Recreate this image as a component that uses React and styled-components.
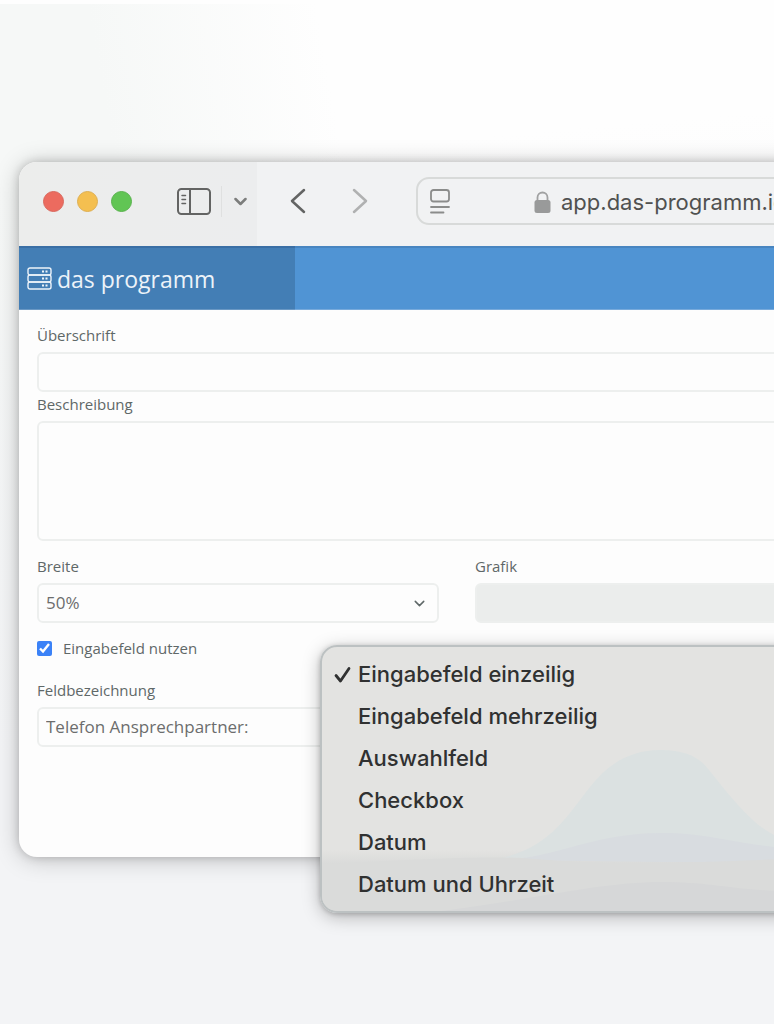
import React, { useState } from "react";
import styled, { createGlobalStyle } from "styled-components";

const GlobalStyle = createGlobalStyle`
  *, *::before, *::after {
    box-sizing: border-box;
  }

  html, body {
    margin: 0;
    min-height: 100%;
    background: #f4f5f6;
  }

  body {
    overflow: hidden;
    font-family: "Open Sans", sans-serif;
    color: #5f6868;
  }

  button, input, textarea, select {
    font: inherit;
    color: inherit;
  }
`;

const StyledPage = styled.main`
  min-height: 100vh;
  padding: 158px 0 120px 19px;
  overflow: hidden;
  border-top: 4px solid #fefefe;
  background:
    linear-gradient(175deg, rgba(243, 244, 246, 0) 16%, #f3f4f6 70%),
    linear-gradient(80deg, #f6f8f7 28%, #fefefe 52%);
`;

const StyledWindow = styled.section`
  width: calc(100% + 240px);
  border-radius: 18px;
  background: #fdfdfd;
  box-shadow: 0 2px 24px rgba(0, 0, 0, 0.22), 0 0 10px rgba(0, 0, 0, 0.18);
`;

const StyledToolbar = styled.header`
  display: flex;
  align-items: center;
  height: 84px;
  padding: 0 24px 6px;
  border-radius: 18px 0 0 0;
  background: linear-gradient(to right, #ecedec 0, #ecedee 238px, #f1f2f3 238px);
`;

const StyledLights = styled.div`
  display: flex;
  gap: 13px;
  margin-right: 45px;
`;

const StyledLight = styled.button`
  width: 21px;
  height: 21px;
  padding: 0;
  border: 1px solid ${({ $edge }) => $edge};
  border-radius: 50%;
  background: ${({ $color }) => $color};
`;

const StyledIconButton = styled.button`
  display: flex;
  align-items: center;
  justify-content: center;
  flex: none;
  width: ${({ $width }) => $width}px;
  height: 32px;
  padding: 0;
  border: 0;
  background: none;
  color: ${({ $color }) => $color || "#636463"};
`;

const StyledDivider = styled.span`
  width: 1px;
  height: 31px;
  margin: 0 10px;
  background: #dfe0e0;
`;

const StyledNavigation = styled.nav`
  display: flex;
  gap: 38px;
  margin: 0 44px 0 38px;
`;

const StyledAddress = styled.label`
  display: flex;
  align-items: center;
  flex: 1;
  height: 48px;
  padding-left: 12px;
  border: 2px solid #d8dad9;
  border-radius: 13px;
  color: #8b8c8b;
`;

const StyledLock = styled.svg`
  flex: none;
  margin: 2px 10px 0 84px;
`;

const StyledAddressInput = styled.input`
  flex: 1;
  min-width: 0;
  padding: 2px 0 0;
  border: 0;
  outline: 0;
  background: none;
  color: #505150;
  font-family: Inter, sans-serif;
  font-size: 22px;
`;

const StyledAppBar = styled.div`
  display: flex;
  height: 64px;
  border-top: 2px solid #4885c0;
  border-bottom: 1px solid #78aadb;
  background: #5094d4;
`;

const StyledBrand = styled.a`
  display: flex;
  align-items: center;
  gap: 5px;
  width: 276px;
  margin: -2px 0 -1px;
  padding-left: 8px;
  border-top: 2px solid #3a6fa5;
  border-bottom: 1px solid #6a98c4;
  background: #437eb5;
  color: #edf3f9;
  font-size: 23px;
  text-decoration: none;
`;

const StyledForm = styled.form`
  position: relative;
  padding: 15px 18px 110px;
`;

const StyledField = styled.div`
  display: flex;
  flex-direction: column;
  gap: 7px;
  margin-bottom: ${({ $space }) => $space || 0}px;
`;

const StyledLabel = styled.label`
  font-size: 15px;
  line-height: 20px;
`;

const StyledInput = styled.input`
  width: 100%;
  height: 40px;
  padding: 0 7px 2px;
  border: 2px solid #edefee;
  border-radius: 6px;
  outline: 0;
  background: ${({ disabled }) => (disabled ? "#ebedec" : "#fdfdfd")};
  color: #6c6d6d;
  font-size: 17px;
`;

const StyledTextarea = styled.textarea`
  display: block;
  width: 100%;
  height: 120px;
  padding: 7px;
  border: 2px solid #edefee;
  border-radius: 6px;
  outline: 0;
  resize: none;
  background: #fdfdfd;
  font-size: 17px;
`;

const StyledColumns = styled.div`
  display: grid;
  grid-template-columns: 402px 1fr;
  gap: 36px;
`;

const StyledSelectBox = styled.div`
  display: grid;
  align-items: center;

  > * {
    grid-area: 1 / 1;
  }

  svg {
    justify-self: end;
    margin-right: 14px;
    pointer-events: none;
  }
`;

const StyledSelect = styled.select`
  width: 100%;
  height: 40px;
  padding: 0 7px 2px;
  border: 2px solid #edefee;
  border-radius: 6px;
  outline: 0;
  appearance: none;
  background: #fdfdfd;
  color: #6c6d6d;
  font-size: 17px;
`;

const StyledCheckRow = styled.label`
  display: flex;
  align-items: center;
  gap: 11px;
  margin: 15px 0 22px;
  font-size: 15px;
  line-height: 20px;
`;

const StyledCheckbox = styled.input`
  width: 15px;
  height: 15px;
  margin: 0;
  accent-color: #3b82f7;
`;

/* Open drop-down, floats over the form and hangs below the window */
const StyledMenu = styled.ul`
  position: absolute;
  top: 335px;
  left: 301px;
  width: 520px;
  margin: 0;
  padding: 6px 0;
  overflow: hidden;
  list-style: none;
  border: 2px solid #bcc1c2;
  border-radius: 17px;
  background: linear-gradient(to bottom, #e3e3e1 77%, #dadbda 82%, #d7d7d7 100%);
  box-shadow: 0 4px 18px rgba(0, 0, 0, 0.26), 0 1px 5px rgba(0, 0, 0, 0.2);
`;

const StyledWave = styled.svg`
  position: absolute;
  left: 0;
  bottom: 0;
`;

const StyledOption = styled.button`
  position: relative;
  display: flex;
  align-items: center;
  gap: 6px;
  width: 100%;
  height: 42px;
  padding: 0 12px;
  border: 0;
  background: none;
  color: #303131;
  font-family: Inter, sans-serif;
  font-size: 22px;
  font-weight: 500;
  text-align: left;
`;

const StyledMark = styled.span`
  display: flex;
  width: 18px;
`;

const options = [
  "Eingabefeld einzeilig",
  "Eingabefeld mehrzeilig",
  "Auswahlfeld",
  "Checkbox",
  "Datum",
  "Datum und Uhrzeit",
];

const SidebarIcon = () => (
  <svg width="34" height="27" viewBox="0 0 34 27" fill="none" stroke="currentColor" strokeWidth="2">
    <rect x="1" y="1" width="32" height="25" rx="3.500" />
    <path d="M13 1v25" />
    <path d="M5 7.500h3.500M5 11.500h3.500M5 15.500h3.500" strokeWidth="1.500" strokeLinecap="round" />
  </svg>
);

const ChevronDown = ({ size = 13, stroke = 2.5 }) => (
  <svg width={size} height={size} viewBox="0 0 13 13" fill="none" stroke="currentColor" strokeWidth={stroke} strokeLinecap="round" strokeLinejoin="round">
    <path d="M1.500 4l5 5 5-5" />
  </svg>
);

const Arrow = ({ forward }) => (
  <svg width="16" height="26" viewBox="0 0 16 26" fill="none" stroke="currentColor" strokeWidth="2.500" strokeLinecap="round" strokeLinejoin="round">
    <path d={forward ? "M2 2l12 11L2 24" : "M14 2L2 13l12 11"} />
  </svg>
);

const ReaderIcon = () => (
  <svg width="20" height="25" viewBox="0 0 20 25" fill="none" stroke="currentColor" strokeWidth="1.800" strokeLinecap="round">
    <rect x="1" y="1" width="18" height="11.500" rx="2.500" />
    <path d="M1 18h18M1 23.500h12.500" />
  </svg>
);

const ServerIcon = () => (
  <svg width="25" height="23" viewBox="0 0 25 23" fill="none" stroke="currentColor" strokeWidth="1.400">
    <rect x="1" y="1" width="23" height="7" rx="2" />
    <rect x="1" y="8" width="23" height="7" rx="2" />
    <rect x="1" y="15" width="23" height="7" rx="2" />
    <path d="M15 4.500h2M18.500 4.500h2M15 11.500h2M18.500 11.500h2M15 18.500h2M18.500 18.500h2" strokeWidth="2" />
  </svg>
);

const Wave = () => (
  <StyledWave width="516" height="163" viewBox="0 0 516 163" aria-hidden="true">
    <path fill="#dbe1e1" d="M180 110C230 98 246 66 268 39C286 16 308 2 338 2C365 2 378 10 387 22C411 52 430 76 452 87C475 100 490 104 516 108V112Z" />
    <path fill="#d8dce0" d="M180 112C235 110 270 85 340 85C400 85 420 102 516 102V114H340Z" />
    <path fill="#dadbda" d="M0 116C90 112 150 108 200 110C270 116 330 118 516 108V163H0Z" />
    <path fill="#d6d7d8" d="M120 163C220 150 280 134 340 134C400 134 410 145 516 144V163Z" />
  </StyledWave>
);

const App = () => {
  const [selected, setSelected] = useState(options[0]);

  return (
    <StyledPage>
      <GlobalStyle />
      <StyledWindow>
        <StyledToolbar>
          <StyledLights>
            <StyledLight type="button" aria-label="Schließen" $color="#ec6b5f" $edge="#d9685d" />
            <StyledLight type="button" aria-label="Minimieren" $color="#f4bf50" $edge="#deaf52" />
            <StyledLight type="button" aria-label="Vergrößern" $color="#61c554" $edge="#59b34d" />
          </StyledLights>
          <StyledIconButton type="button" aria-label="Seitenleiste" $width={34}>
            <SidebarIcon />
          </StyledIconButton>
          <StyledDivider />
          <StyledIconButton type="button" aria-label="Tabgruppen" $width={16} $color="#7c7d7c">
            <ChevronDown />
          </StyledIconButton>
          <StyledNavigation>
            <StyledIconButton type="button" aria-label="Zurück" $width={24}>
              <Arrow />
            </StyledIconButton>
            <StyledIconButton type="button" aria-label="Vorwärts" $width={24} $color="#b0b1b1">
              <Arrow forward />
            </StyledIconButton>
          </StyledNavigation>
          <StyledAddress>
            <ReaderIcon />
            <StyledLock width="17" height="23" viewBox="0 0 17 23" fill="none">
              <path d="M3.500 10V6.500a5 5 0 0 1 10 0V10" stroke="#a0a1a1" strokeWidth="1.800" />
              <rect x="0.500" y="9" width="16" height="13" rx="2.500" fill="#999a9a" />
            </StyledLock>
            <StyledAddressInput aria-label="Adresse" defaultValue="app.das-programm.io" />
          </StyledAddress>
        </StyledToolbar>

        <StyledAppBar>
          <StyledBrand href="#">
            <ServerIcon />
            das programm
          </StyledBrand>
        </StyledAppBar>

        <StyledForm>
          <StyledField $space={2}>
            <StyledLabel htmlFor="title">Überschrift</StyledLabel>
            <StyledInput id="title" />
          </StyledField>
          <StyledField $space={15}>
            <StyledLabel htmlFor="description">Beschreibung</StyledLabel>
            <StyledTextarea id="description" />
          </StyledField>
          <StyledColumns>
            <StyledField>
              <StyledLabel htmlFor="width">Breite</StyledLabel>
              <StyledSelectBox>
                <StyledSelect id="width" defaultValue="50%">
                  <option>50%</option>
                  <option>100%</option>
                </StyledSelect>
                <ChevronDown size={11} stroke={1.8} />
              </StyledSelectBox>
            </StyledField>
            <StyledField>
              <StyledLabel htmlFor="graphic">Grafik</StyledLabel>
              <StyledInput id="graphic" disabled />
            </StyledField>
          </StyledColumns>
          <StyledCheckRow>
            <StyledCheckbox type="checkbox" defaultChecked />
            Eingabefeld nutzen
          </StyledCheckRow>
          <StyledColumns>
            <StyledField>
              <StyledLabel htmlFor="name">Feldbezeichnung</StyledLabel>
              <StyledInput id="name" defaultValue="Telefon Ansprechpartner:" />
            </StyledField>
          </StyledColumns>

          <StyledMenu aria-label="Feldtyp">
            <Wave />
            {options.map((option) => (
              <li key={option}>
                <StyledOption
                  type="button"
                  aria-pressed={option === selected}
                  onClick={() => setSelected(option)}
                >
                  <StyledMark>
                    {option === selected && (
                      <svg width="18" height="18" viewBox="0 0 18 18" fill="none" stroke="currentColor" strokeWidth="2.800" strokeLinecap="round" strokeLinejoin="round">
                        <path d="M2 10.500L6.500 16 15 3.500" />
                      </svg>
                    )}
                  </StyledMark>
                  {option}
                </StyledOption>
              </li>
            ))}
          </StyledMenu>
        </StyledForm>
      </StyledWindow>
    </StyledPage>
  );
};

export default App;
